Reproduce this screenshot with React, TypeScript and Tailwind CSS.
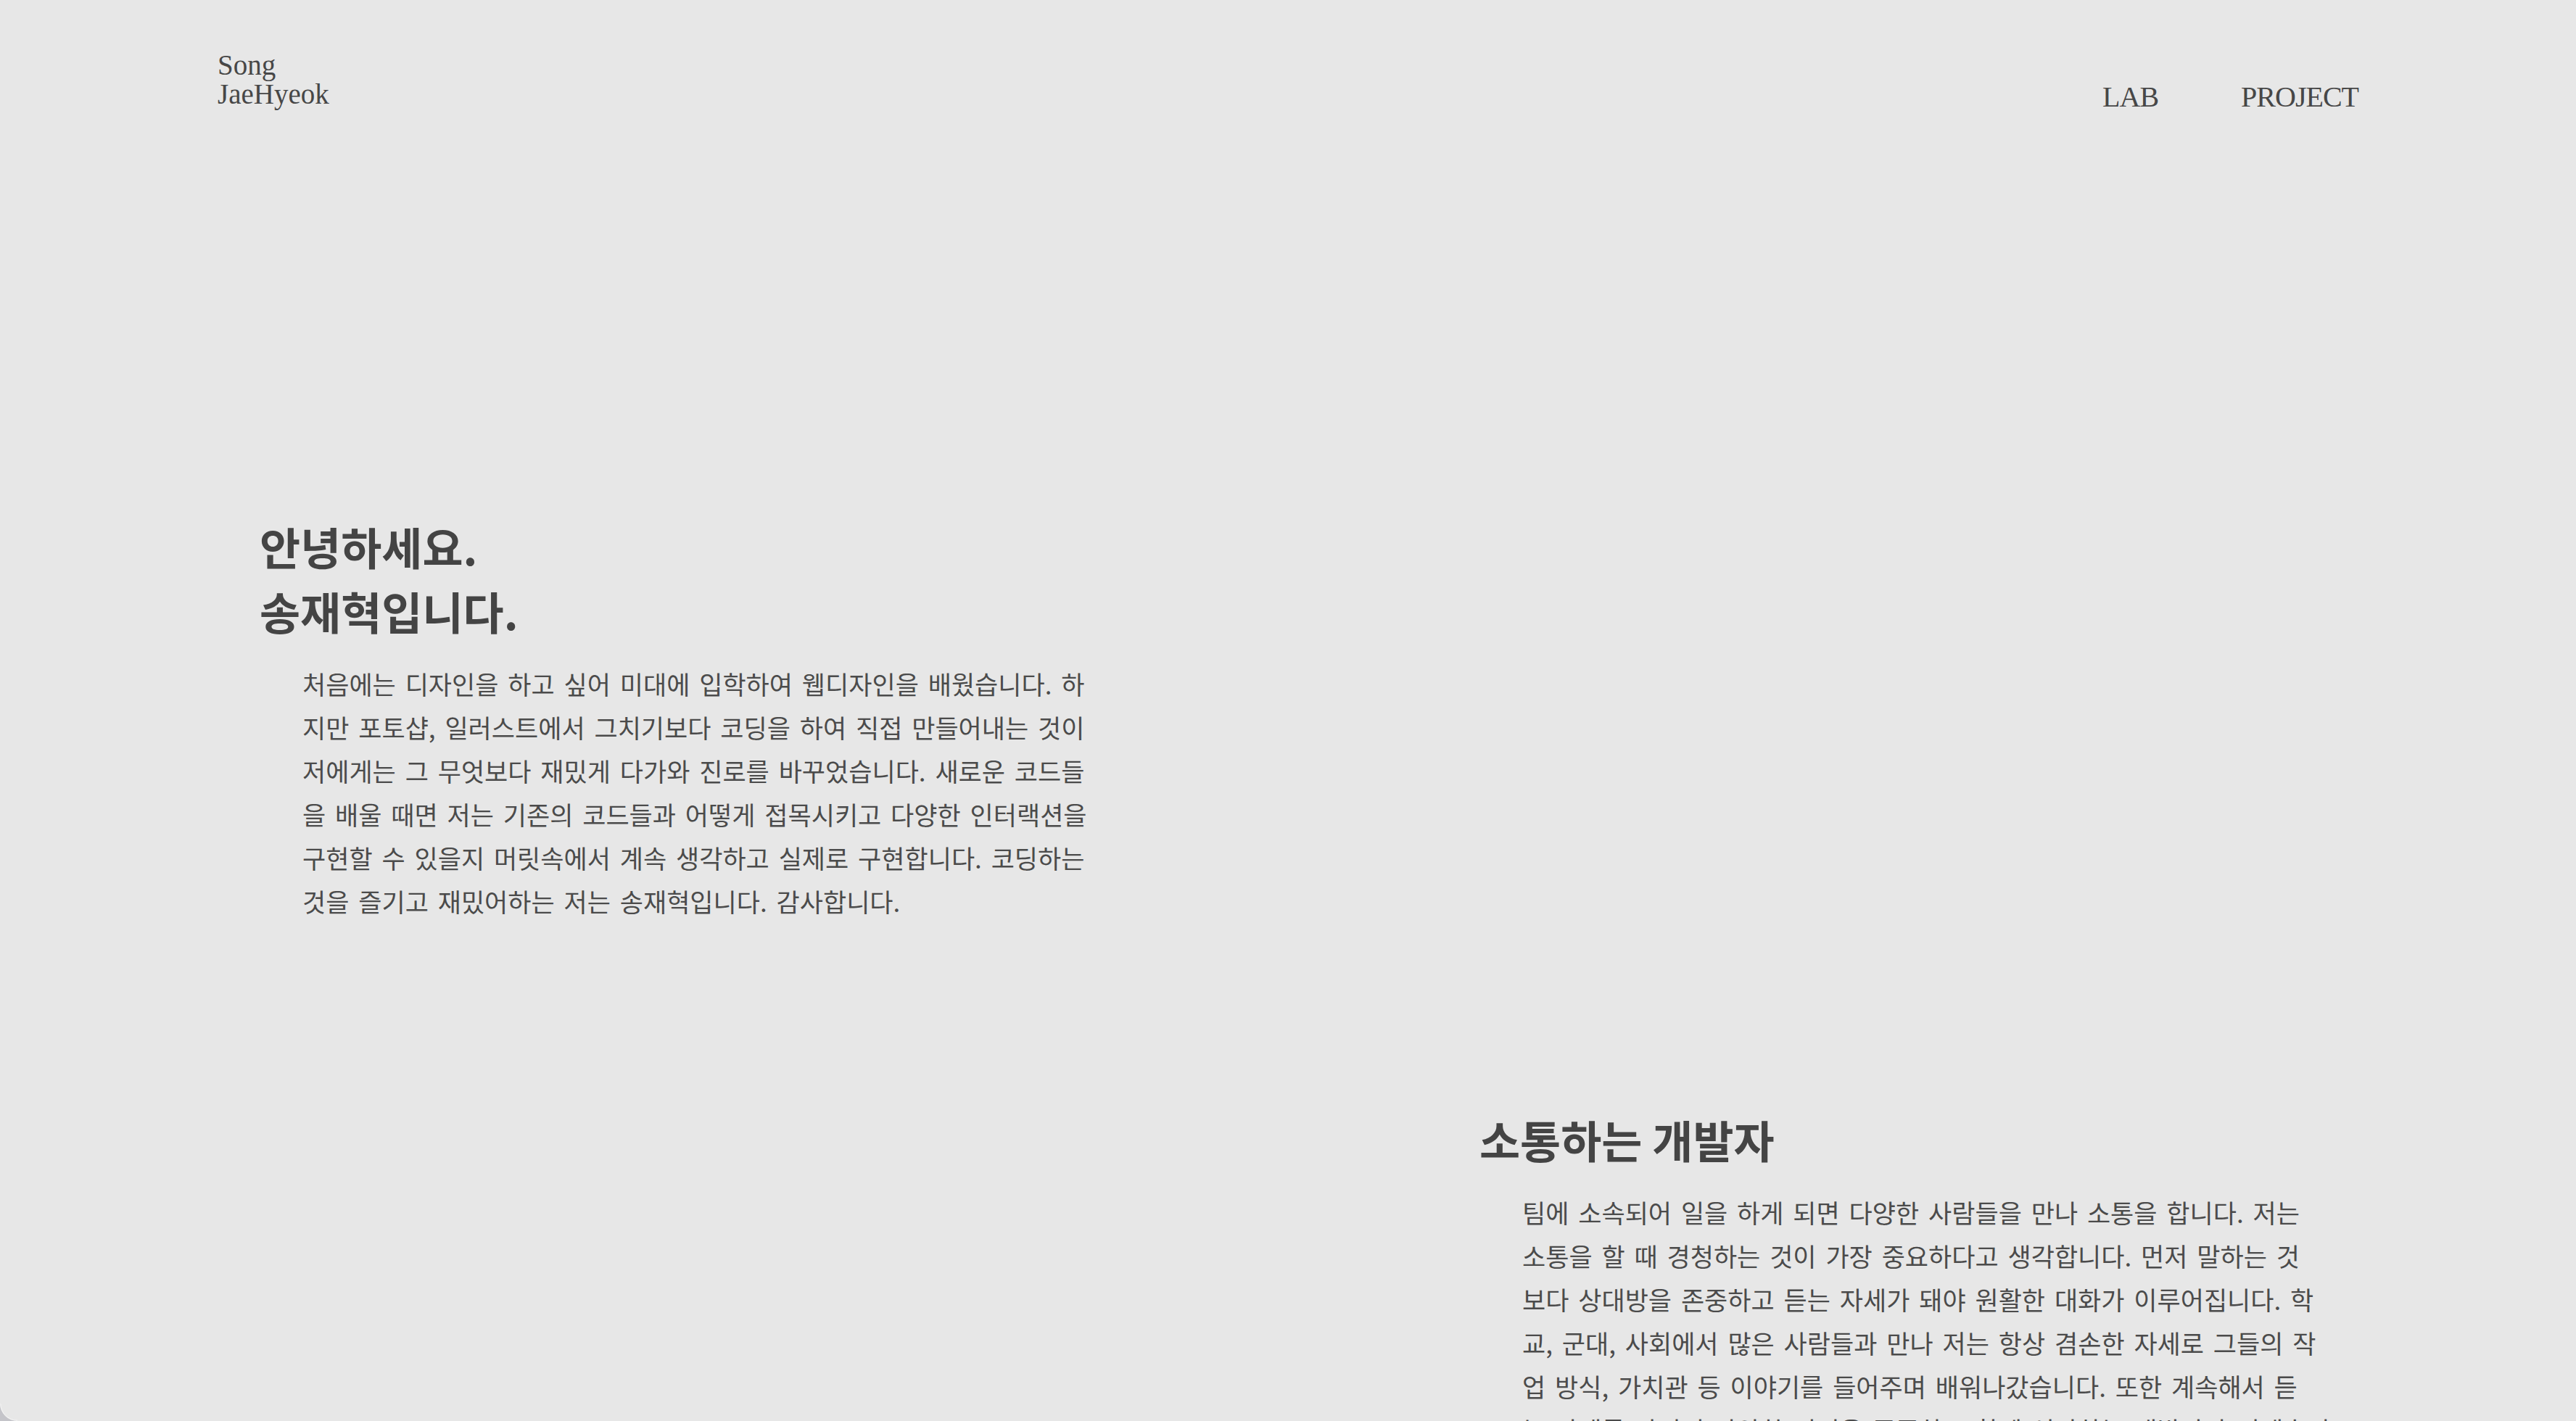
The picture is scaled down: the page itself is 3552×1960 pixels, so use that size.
import React from 'react';

const introLines = [
  '처음에는 디자인을 하고 싶어 미대에 입학하여 웹디자인을 배웠습니다. 하',
  '지만 포토샵, 일러스트에서 그치기보다 코딩을 하여 직접 만들어내는 것이',
  '저에게는 그 무엇보다 재밌게 다가와 진로를 바꾸었습니다. 새로운 코드들',
  '을 배울 때면 저는 기존의 코드들과 어떻게 접목시키고 다양한 인터랙션을',
  '구현할 수 있을지 머릿속에서 계속 생각하고 실제로 구현합니다. 코딩하는',
  '것을 즐기고 재밌어하는 저는 송재혁입니다. 감사합니다.',
];

const talkLines = [
  '팀에 소속되어 일을 하게 되면 다양한 사람들을 만나 소통을 합니다. 저는',
  '소통을 할 때 경청하는 것이 가장 중요하다고 생각합니다. 먼저 말하는 것',
  '보다 상대방을 존중하고 듣는 자세가 돼야 원활한 대화가 이루어집니다. 학',
  '교, 군대, 사회에서 많은 사람들과 만나 저는 항상 겸손한 자세로 그들의 작',
  '업 방식, 가치관 등 이야기를 들어주며 배워나갔습니다. 또한 계속해서 듣',
  '는 자세를 가지며 다양한 의견을 존중하고 함께 성장하는 개발자가 되겠습니',
  '다.',
];

const Paragraph: React.FC<{ lines: string[]; className?: string }> = ({ lines, className }) => (
  <p
    className={`pl-[59px] text-[35px] leading-[60px] text-[#4b4b4b] [word-spacing:5px] font-['Noto_Sans_CJK_KR','Noto_Sans',sans-serif] ${className ?? ''}`}
  >
    {lines.map((line, i) => (
      <span key={i} className="block whitespace-pre">
        {line}
      </span>
    ))}
  </p>
);

export default function App() {
  return (
    <div className="min-h-screen bg-[#e7e7e7] text-[#444] pb-[300px]">
      <header className="flex items-start justify-between px-[300px] pt-[70px]">
        <a className="block text-[39px] leading-[40px] text-[#474747] font-['Liberation_Serif',serif]">
          Song
          <br />
          JaeHyeok
        </a>
        <nav className="mt-[44px] flex gap-[114px] text-[40px] leading-[40px] tracking-[-1px] text-[#474747] font-['Liberation_Serif',serif]">
          <a>LAB</a>
          <a>PROJECT</a>
        </nav>
      </header>

      <main className="px-[300px]">
        <section className="mt-[555px] ml-[58px]">
          <h1 className="text-[61px] leading-[89px] font-bold text-[#444] font-['Noto_Sans_CJK_KR',sans-serif]">
            안녕하세요.
            <br />
            송재혁입니다.
          </h1>
          <Paragraph lines={introLines} className="mt-[26px]" />
        </section>

        <section className="mt-[254px] ml-[1740px]">
          <h2 className="text-[61px] leading-[89px] font-bold text-[#444] font-['Noto_Sans_CJK_KR',sans-serif]">
            소통하는 개발자
          </h2>
          <Paragraph lines={talkLines} className="mt-[26px]" />
        </section>
      </main>

      <svg className="fixed bottom-0 left-0 w-[24px] h-[24px]" viewBox="0 0 24 24">
        <path d="M0 0 A24 24 0 0 0 24 24 L0 24 Z" fill="#c4c4c9" />
        <path d="M0.8 0 A23.2 23.2 0 0 0 24 23.2" fill="none" stroke="#f4f4f4" strokeWidth="1" />
      </svg>
    </div>
  );
}
